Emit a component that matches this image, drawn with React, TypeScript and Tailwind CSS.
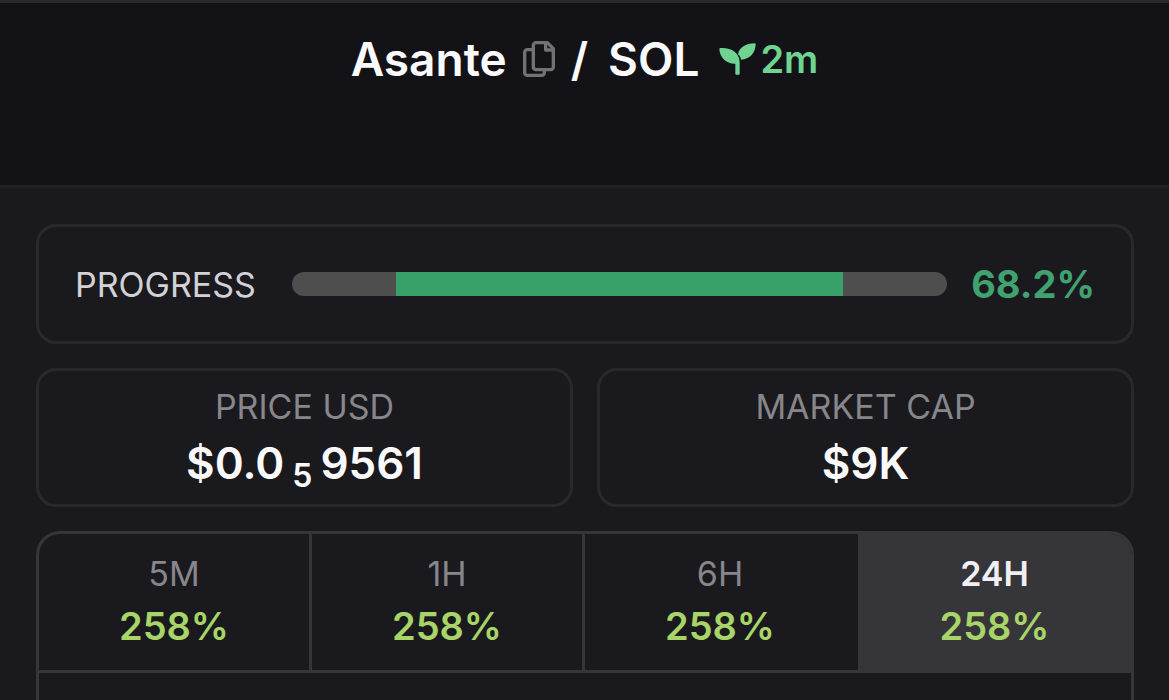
import { useState } from "react";
import clsx from "clsx";

const PROGRESS = 68.2;

const PERIODS = [
  { label: "5M", change: "258%" },
  { label: "1H", change: "258%" },
  { label: "6H", change: "258%" },
  { label: "24H", change: "258%" },
];

function CopyIcon() {
  return (
    <svg
      viewBox="0 0 96 108"
      className="h-9 w-8"
      fill="none"
      stroke="currentColor"
      strokeWidth="10"
      strokeLinejoin="round"
      aria-hidden="true"
    >
      <path d="M39 5h34l18 18v55a8 8 0 0 1-8 8H39a8 8 0 0 1-8-8V13a8 8 0 0 1 8-8z" />
      <path d="M68 5v22h23" />
      <path d="M31 26H13a8 8 0 0 0-8 8v61a8 8 0 0 0 8 8h43a8 8 0 0 0 8-8V86" />
    </svg>
  );
}

function SproutIcon() {
  return (
    <svg
      viewBox="0 0 111 96"
      className="h-8 w-[37px]"
      fill="currentColor"
      aria-hidden="true"
    >
      <path d="M4 15C36 13 62 28 62 58V92a3 3 0 0 1-3 3H52a3 3 0 0 1-3-3V62C22 63 2 44 1 18a3 3 0 0 1 3-3z" />
      <path d="M107 1a3 3 0 0 1 3 3C109 32 92 49 66 50C65 43 62 38 57 34C61 13 80 1 107 1z" />
    </svg>
  );
}

function Header() {
  return (
    <header className="flex h-[188px] items-start justify-center border-y-[3px] border-t-[#29282d] border-b-[#212025] bg-[#131217] pt-7">
      <div className="flex h-14 items-center">
        <h1 className="flex items-center text-[46px] leading-14 font-semibold text-[#fafafc]">
          Asante
          <button
            type="button"
            aria-label="Copy token address"
            className="mx-4 text-[#727176]"
          >
            <CopyIcon />
          </button>
          <span className="mr-5">/</span>
          SOL
        </h1>
        <span className="ml-5 flex items-center gap-1 text-[38px] font-semibold text-[#6fd492]">
          <SproutIcon />
          2m
        </span>
      </div>
    </header>
  );
}

function ProgressCard() {
  return (
    <section className="flex h-[120px] items-center rounded-[20px] border-3 border-[#29282d] px-9">
      <span id="progress-label" className="text-[34px] text-[#d2d1d6]">
        PROGRESS
      </span>
      <div
        role="progressbar"
        aria-labelledby="progress-label"
        aria-valuenow={PROGRESS}
        className="mr-6 ml-9 flex h-6 flex-1 justify-center overflow-hidden rounded-full bg-[#4e4e4e]"
      >
        <div className="bg-[#38a169]" style={{ width: `${PROGRESS}%` }} />
      </div>
      <span className="text-[38px] font-bold text-[#3fa26f]">
        {PROGRESS}%
      </span>
    </section>
  );
}

function StatCard({
  label,
  children,
}: {
  label: string;
  children: React.ReactNode;
}) {
  return (
    <div className="flex h-[139px] flex-col items-center rounded-[20px] border-3 border-[#29282d] pt-3 text-center">
      <span className="text-[34px] leading-12 text-[#87868b]">{label}</span>
      <span className="flex items-baseline text-[44px] leading-16 font-semibold text-[#fafafc]">
        {children}
      </span>
    </div>
  );
}

function PeriodTabs() {
  const [active, setActive] = useState("24H");

  return (
    <section className="flex flex-1 flex-col overflow-hidden rounded-t-3xl border-3 border-b-0 border-[#36353a]">
      <div role="tablist" className="grid grid-cols-4 border-b-3 border-[#36353a]">
        {PERIODS.map(({ label, change }, i) => (
          <button
            key={label}
            type="button"
            role="tab"
            aria-selected={active === label}
            onClick={() => setActive(label)}
            className={clsx(
              "flex h-[136px] flex-col items-center border-r-3 pt-4 last:border-r-0",
              active === label && "bg-[#36353a]",
              PERIODS[i + 1]?.label === active
                ? "border-transparent"
                : "border-[#36353a]"
            )}
          >
            <span
              className={clsx(
                "text-[34px] leading-12",
                active === label
                  ? "font-semibold text-[#f0eff4]"
                  : "text-[#87868b]"
              )}
            >
              {label}
            </span>
            <span className="text-[38px] leading-14 font-semibold text-[#a8d468]">
              {change}
            </span>
          </button>
        ))}
      </div>
    </section>
  );
}

export default function App() {
  return (
    <div className="flex min-h-screen flex-col bg-[#1a191e] font-['Inter',sans-serif]">
      <Header />
      <main className="flex flex-1 flex-col gap-6 pt-9 pr-[35px] pl-9">
        <ProgressCard />
        <div className="grid grid-cols-2 gap-6">
          <StatCard label="PRICE USD">
            $0.0
            <sub className="bottom-0 mx-2 translate-y-2 text-[32px] leading-none">
              5
            </sub>
            9561
          </StatCard>
          <StatCard label="MARKET CAP">$9K</StatCard>
        </div>
        <PeriodTabs />
      </main>
    </div>
  );
}
